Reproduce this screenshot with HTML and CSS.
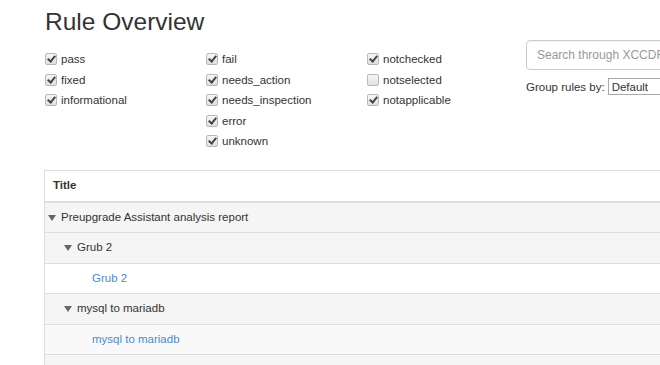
FILE: index.html
```html
<!DOCTYPE html>
<html lang="en">
<head>
  <meta charset="UTF-8">
  <title>Rule Overview</title>
  <link rel="stylesheet" href="styles.css">
</head>
<body>
  <div class="page">
    <h1 class="page-title">Rule Overview</h1>

    <!-- Result filters -->
    <div class="filters">
      <div class="filter-col">
        <label class="check"><input type="checkbox" checked> pass</label>
        <label class="check"><input type="checkbox" checked> fixed</label>
        <label class="check"><input type="checkbox" checked> informational</label>
      </div>
      <div class="filter-col">
        <label class="check"><input type="checkbox" checked> fail</label>
        <label class="check"><input type="checkbox" checked> needs_action</label>
        <label class="check"><input type="checkbox" checked> needs_inspection</label>
        <label class="check"><input type="checkbox" checked> error</label>
        <label class="check"><input type="checkbox" checked> unknown</label>
      </div>
      <div class="filter-col">
        <label class="check"><input type="checkbox" checked> notchecked</label>
        <label class="check"><input type="checkbox"> notselected</label>
        <label class="check"><input type="checkbox" checked> notapplicable</label>
      </div>
      <div class="search-col">
        <input type="text" class="search" placeholder="Search through XCCDF rules">
        <div class="group-by">
          <label for="group">Group rules by:</label>
          <select id="group" class="group-select">
            <option>Default</option>
          </select>
        </div>
      </div>
    </div>

    <!-- Rules tree -->
    <table class="rules">
      <thead>
        <tr><th>Title</th></tr>
      </thead>
      <tbody>
        <tr class="group-row">
          <td class="level-0"><span class="expander"></span>Preupgrade Assistant analysis report</td>
        </tr>
        <tr class="group-row">
          <td class="level-1"><span class="expander"></span>Grub 2</td>
        </tr>
        <tr class="rule-row">
          <td class="level-2"><a href="#">Grub 2</a></td>
        </tr>
        <tr class="group-row">
          <td class="level-1"><span class="expander"></span>mysql to mariadb</td>
        </tr>
        <tr class="rule-row odd">
          <td class="level-2"><a href="#">mysql to mariadb</a></td>
        </tr>
        <tr class="group-row">
          <td class="level-1">&nbsp;</td>
        </tr>
      </tbody>
    </table>
  </div>
</body>
</html>
```

FILE: styles.css
```css
/* General */
* {
  box-sizing: border-box;
}

body {
  margin: 0;
  overflow: hidden;
  font-family: 'Liberation Sans', Arial, sans-serif;
  font-size: 11.5px;
  color: #333;
  background: #fff;
}

.page {
  width: 700px;
  margin-left: 44px;
}

.page-title {
  margin: 9px 0 0 1px;
  font-size: 24.5px;
  font-weight: normal;
  line-height: 26px;
}

/* Filters */
.filters {
  display: flex;
  margin-top: 5px;
}

.filter-col {
  width: 161px;
  flex-shrink: 0;
  padding-top: 9px;
}

.check {
  display: flex;
  align-items: center;
  height: 20.5px;
  padding-left: 1px;
  white-space: nowrap;
}

.check input {
  appearance: none;
  -webkit-appearance: none;
  position: relative;
  width: 12px;
  height: 12px;
  margin: 0 4px 0 0;
  border: 1px solid #b8b8b8;
  border-radius: 2px;
  background: linear-gradient(#f6f6f6, #e0e0e0);
}

.check input:checked::after {
  content: "";
  position: absolute;
  left: 3px;
  top: 0;
  width: 3px;
  height: 6px;
  border: solid #444;
  border-width: 0 2px 2px 0;
  transform: rotate(40deg);
}

.search-col {
  width: 200px;
  flex-shrink: 0;
}

.search {
  display: block;
  width: 100%;
  height: 30px;
  margin-left: -1px;
  padding: 0 10px;
  font: inherit;
  font-size: 12px;
  color: #555;
  border: 1px solid #ccc;
  border-radius: 4px;
  box-shadow: inset 0 1px 1px rgba(0, 0, 0, 0.05);
}

.search::placeholder {
  color: #999;
}

.group-by {
  display: flex;
  align-items: center;
  margin: 8px 0 0 -1px;
  white-space: nowrap;
}

.group-by label {
  margin-right: 3px;
}

.group-select {
  appearance: none;
  -webkit-appearance: none;
  width: 90px;
  height: 17px;
  padding: 0 3px;
  font: inherit;
  color: #333;
  background: #fff;
  border: 1px solid #a9a9a9;
  border-radius: 0;
}

/* Rules table */
.rules {
  width: 100%;
  margin-top: 18.5px;
  border-collapse: collapse;
  border: 1px solid #ddd;
}

.rules th,
.rules td {
  padding: 8px;
  line-height: 13.5px;
  text-align: left;
}

.rules th {
  border-bottom: 2px solid #ddd;
}

.rules td {
  border-top: 1px solid #ddd;
}

.group-row {
  background: #f5f5f5;
}

.rule-row {
  background: #fff;
}

.rule-row.odd {
  background: #f9f9f9;
}

.rules a {
  color: #4a8bd0;
  text-decoration: none;
}

.level-0 { padding-left: 3px !important; }
.level-1 { padding-left: 19px !important; }
.level-2 { padding-left: 47px !important; }

.expander {
  display: inline-block;
  width: 13px;
  vertical-align: middle;
}

.expander::before {
  content: "";
  display: block;
  width: 0;
  height: 0;
  border-left: 4px solid transparent;
  border-right: 4px solid transparent;
  border-top: 6px solid #666;
  margin-top: 1px;
}
```
